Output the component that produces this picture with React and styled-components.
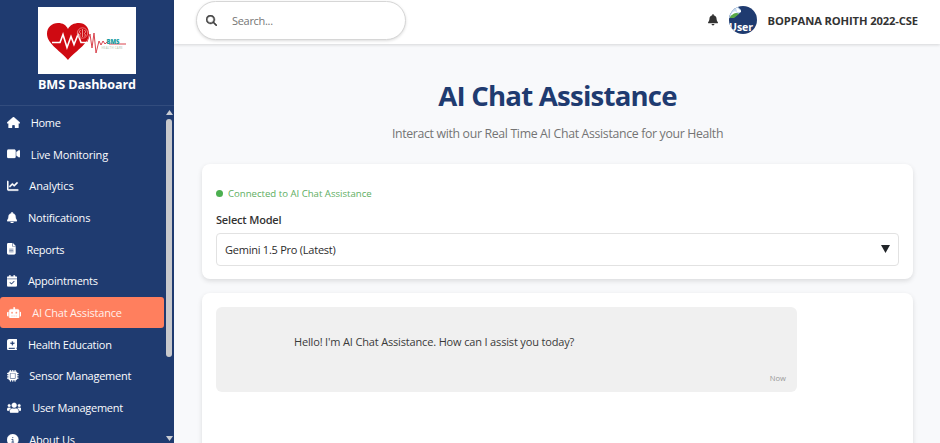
import React from "react";
import styled, { createGlobalStyle, css } from "styled-components";
import {
  FaHouse, FaVideo, FaChartLine, FaBell, FaFileLines, FaCalendarCheck, FaRobot,
  FaBookMedical, FaMicrochip, FaCircleInfo, FaMagnifyingGlass,
} from "react-icons/fa6";
import { FaUsers } from "react-icons/fa";

const GlobalStyle = createGlobalStyle`
  * { box-sizing: border-box; }
  body { margin: 0; background: #f8f9fb; font-family: "Open Sans", "Noto Sans", sans-serif; color: #333; }
`;

const Shell = styled.div`
  display: flex;
  width: 940px;
  height: 443px;
  overflow: hidden;
`;

const Sidebar = styled.aside`
  display: flex;
  flex-direction: column;
  flex: 0 0 174px;
  background: #1f3b70;
  color: #fff;
`;

const Brand = styled.div`
  display: flex;
  flex-direction: column;
  align-items: center;
  height: 106px;
  padding-top: 7px;
  border-bottom: 1px solid #324c7d;
`;

const Logo = styled.svg`
  display: block;
  width: 98px;
  height: 67px;
  background: #fff;
`;

const BrandName = styled.div`
  margin-top: 2px;
  font-size: 12.6px;
  line-height: 18px;
  font-weight: 700;
  letter-spacing: -0.08px;
  white-space: nowrap;
`;

const NavArea = styled.div`
  display: flex;
  flex: 1;
  min-height: 0;
  justify-content: space-between;
`;

const NavList = styled.nav`
  width: 164px;
  padding-top: 0.6px;
  overflow: hidden;
`;

const NavItem = styled.a`
  display: flex;
  align-items: center;
  height: 31.7px;
  padding-left: 7px;
  gap: 10.8px;
  border-radius: 3px;
  font-size: 11px;
  letter-spacing: ${(p) => p.$spacing}px;
  white-space: nowrap;
  color: #fbfcfe;
  ${(p) => p.$active && css`
    background: #ff7f5e;
    color: #fff0eb;
  `}
  svg { width: ${(p) => p.$iconWidth}px; height: 11.5px; flex: none; color: #fff; stroke: #fff; stroke-width: 12; }
`;

const ScrollTrack = styled.div`
  display: flex;
  flex-direction: column;
  align-items: center;
  width: 10px;
  padding: 4px 0 2px;
`;

const Arrow = styled.svg`
  width: 7px;
  height: 5px;
  fill: #c9ccd3;
`;

const Thumb = styled.div`
  width: 6px;
  height: 238px;
  margin: 4px 0 auto;
  border-radius: 3px;
  background: #c8c9cc;
`;

const Main = styled.main`
  flex: 1;
  min-width: 0;
`;

const TopBar = styled.header`
  display: flex;
  align-items: flex-start;
  justify-content: space-between;
  height: 44px;
  padding: 1px 22px 0 22px;
  background: #fff;
  box-shadow: 0 1px 3px rgba(0, 0, 0, 0.14);
`;

const SearchBox = styled.div`
  display: flex;
  align-items: center;
  gap: 15px;
  width: 210px;
  height: 39px;
  padding-left: 9px;
  border: 1px solid #d6d6d6;
  border-radius: 20px;
  background: #fff;
  box-shadow: 0 1px 3px rgba(0, 0, 0, 0.14);
  font-size: 11px;
  letter-spacing: -0.3px;
  color: #757575;
  svg { width: 11px; height: 11px; color: #444; stroke: #444; stroke-width: 20; }
`;

const Account = styled.div`
  display: flex;
  align-items: center;
  height: 38px;
  font-size: 11.2px;
  font-weight: 700;
  color: #333;
  white-space: nowrap;
  > svg { width: 10px; height: 11.5px; }
`;

const Avatar = styled.svg`
  && { width: 28px; height: 28px; margin: 0 11px; }
`;

const AccountName = styled.span`
  letter-spacing: -0.12px;
`;

const Content = styled.div`
  padding: 31px 27px 0 28px;
`;

const Title = styled.h1`
  margin: 0;
  font-size: 27.6px;
  line-height: 40px;
  font-weight: 700;
  letter-spacing: -0.79px;
  text-align: center;
  color: #1f3b70;
`;

const Subtitle = styled.p`
  margin: 9px 0 20px;
  font-size: 12.3px;
  line-height: 20px;
  letter-spacing: -0.33px;
  text-align: center;
  color: #747474;
`;

const Card = styled.section`
  height: ${(p) => p.$height}px;
  margin-bottom: 14px;
  padding: 14px;
  border-radius: 8px;
  background: #fff;
  box-shadow: 0 2px 5px rgba(0, 0, 0, 0.12);
`;

const Status = styled.div`
  display: flex;
  align-items: center;
  gap: 5px;
  height: 16px;
  margin-top: 7px;
  font-size: 9.6px;
  color: #5eae62;
`;

const StatusDot = styled.span`
  width: 7px;
  height: 7px;
  border-radius: 50%;
  background: #4caf50;
`;

const Label = styled.div`
  margin-top: 11px;
  font-size: 11px;
  line-height: 16px;
  font-weight: 600;
  letter-spacing: -0.18px;
  color: #333;
`;

const Select = styled.div`
  display: flex;
  align-items: center;
  justify-content: space-between;
  height: 33px;
  margin-top: 4.5px;
  padding: 0 8px;
  border: 1px solid #e2e2e2;
  border-radius: 4px;
  font-size: 11px;
  letter-spacing: -0.24px;
  color: #2b2b2b;
  svg { width: 9px; height: 8px; margin-bottom: 1px; fill: #212529; }
`;

const Message = styled.div`
  display: flex;
  flex-direction: column;
  justify-content: space-between;
  width: 581px;
  height: 85px;
  padding: 27px 11px 8px 78px;
  border-radius: 6px;
  background: #f0f0f0;
  font-size: 11px;
  line-height: 16px;
  letter-spacing: -0.16px;
  color: #3a3a3a;
`;

const Time = styled.div`
  align-self: flex-end;
  font-size: 7.6px;
  line-height: 12px;
  letter-spacing: 0;
  color: #999;
`;

const items = [
  ["Home", FaHouse, 13, -0.35],
  ["Live Monitoring", FaVideo, 13, -0.16],
  ["Analytics", FaChartLine, 11.5, -0.12],
  ["Notifications", FaBell, 10.1, -0.19],
  ["Reports", FaFileLines, 8.6, -0.3],
  ["Appointments", FaCalendarCheck, 10.1, -0.24],
  ["AI Chat Assistance", FaRobot, 14.4, -0.2],
  ["Health Education", FaBookMedical, 10.1, -0.25],
  ["Sensor Management", FaMicrochip, 11.5, -0.26],
  ["User Management", FaUsers, 14.4, -0.28],
  ["About Us", FaCircleInfo, 11.5, -0.2],
];

function BrandLogo() {
  return (
    <Logo viewBox="0 0 98 67">
      <path d="M30 53C24 45 9 37 9 27c0-7 5-11 11-11 5 0 8 2 10 6 2-4 6-6 11-6 6 0 10 4 10 11C51 37 36 45 30 53Z" fill="#cf0a12" />
      <path d="M14 35.500h8l3-8 4 13 4-11 3 8 4-10 3 8h9" fill="none" stroke="#fff" strokeWidth="1.600" />
      <circle cx="44.500" cy="26" r="5.200" fill="none" stroke="#ef8d8d" strokeWidth="0.800" />
      <path d="M44.500 22v8M42.500 23q-2.500 2 0 3.500-2 1.500 0 3M46.500 23q2.500 2 0 3.500 2 1.500 0 3" fill="none" stroke="#ef9c9c" strokeWidth="0.900" />
      <path d="M49 35l3-8 2 14 2-15 2 20 3-12 2 4 2-4 2 3 2-2 2 2h17" fill="none" stroke="#d9444e" strokeWidth="1" />
      <text x="68.500" y="36.500" fontSize="6.500" fontWeight="800" fill="#159ca0" textLength="13" lengthAdjust="spacingAndGlyphs">BMS</text>
      <text x="63.500" y="41.500" fontSize="2.800" fill="#a9b79b" textLength="21">HEALTH CARE</text>
    </Logo>
  );
}

function UserAvatar() {
  return (
    <Avatar viewBox="0 0 28 28">
      <defs>
        <clipPath id="avatar-clip"><circle cx="14" cy="14" r="14" /></clipPath>
      </defs>
      <g clipPath="url(#avatar-clip)">
        <rect width="28" height="28" fill="#1f3b70" />
        <path d="M0 0h8l4 4v2L4 12H0Z" fill="#c6dcf2" />
        <path d="M3 7q2-3 5-1l-3 3H2Z" fill="#fff" />
        <path d="M1 11q5-6 9-3l-5 4H1Z" fill="#58a846" />
        <path d="M7 1l5 4v1H8Z" fill="#fff" />
        <text x="0" y="24.500" fontSize="10.500" fontWeight="700" fill="#fff" textLength="24">User</text>
      </g>
    </Avatar>
  );
}

export default function App() {
  return (
    <Shell>
      <GlobalStyle />
      <Sidebar>
        <Brand>
          <BrandLogo />
          <BrandName>BMS Dashboard</BrandName>
        </Brand>
        <NavArea>
          <NavList>
            {items.map(([label, Icon, iconWidth, spacing]) => (
              <NavItem
                key={label}
                $iconWidth={iconWidth}
                $spacing={spacing}
                $active={label === "AI Chat Assistance"}
              >
                <Icon />
                <span>{label}</span>
              </NavItem>
            ))}
          </NavList>
          <ScrollTrack>
            <Arrow viewBox="0 0 7 5"><path d="M3.500 0L7 5H0Z" /></Arrow>
            <Thumb />
            <Arrow viewBox="0 0 7 5"><path d="M3.500 5L7 0H0Z" /></Arrow>
          </ScrollTrack>
        </NavArea>
      </Sidebar>
      <Main>
        <TopBar>
          <SearchBox><FaMagnifyingGlass /><span>Search...</span></SearchBox>
          <Account>
            <FaBell />
            <UserAvatar />
            <AccountName>BOPPANA ROHITH 2022-CSE</AccountName>
          </Account>
        </TopBar>
        <Content>
          <Title>AI Chat Assistance</Title>
          <Subtitle>Interact with our Real Time AI Chat Assistance for your Health</Subtitle>
          <Card $height={115}>
            <Status><StatusDot /><span>Connected to AI Chat Assistance</span></Status>
            <Label>Select Model</Label>
            <Select>
              <span>Gemini 1.5 Pro (Latest)</span>
              <svg viewBox="0 0 9 8"><path d="M0 0h9L4.500 8Z" /></svg>
            </Select>
          </Card>
          <Card $height={200}>
            <Message>
              <span>Hello! I'm AI Chat Assistance. How can I assist you today?</span>
              <Time>Now</Time>
            </Message>
          </Card>
        </Content>
      </Main>
    </Shell>
  );
}
